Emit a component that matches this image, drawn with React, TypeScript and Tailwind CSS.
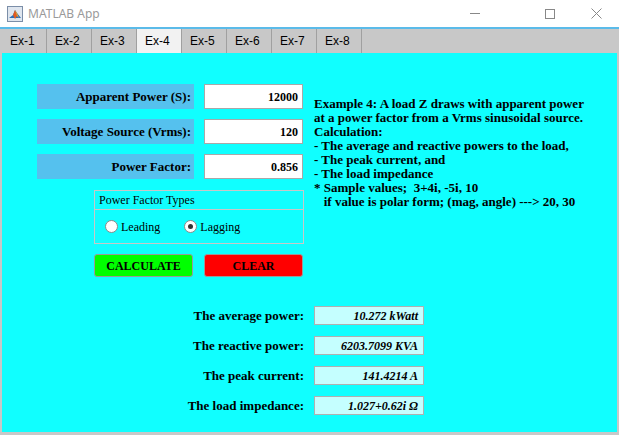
import React from "react";

const serif = { fontFamily: '"Liberation Serif", "DejaVu Serif", serif' };

function TitleBar() {
  return (
    <div className="h-[29px] bg-white flex items-center border-b-2 border-[#5bbbe9]">
      <svg width="16" height="16" viewBox="0 0 16 16" className="ml-[7px]">
        <rect x="0.5" y="0.5" width="15" height="15" fill="#dfe6ef" stroke="#7b8ea8" />
        <path d="M2 12 L6 9 L8 4 L10 7 L14 12 Z" fill="#2b6fb7" />
        <path d="M6 9 L8 4 L10 10 L8 13 Z" fill="#e55b1f" />
        <path d="M8 4 L10 7 L12 12 L10 10 Z" fill="#f5a623" />
      </svg>
      <span className="ml-[5px] text-[12px] text-[#9a9a9a]" style={{ fontFamily: '"Noto Sans", sans-serif' }}>
        MATLAB App
      </span>
      <div className="ml-auto flex items-center h-full">
        <div className="w-[46px] flex justify-center">
          <div className="w-[10px] h-px bg-[#888]" />
        </div>
        <div className="w-[46px] ml-[29px] flex justify-center">
          <div className="w-[10px] h-[10px] border border-[#888]" />
        </div>
        <div className="w-[46px] flex justify-center">
          <svg width="11" height="11" viewBox="0 0 11 11">
            <path d="M0.5 0.5 L10.5 10.5 M10.5 0.5 L0.5 10.5" stroke="#888" strokeWidth="1" />
          </svg>
        </div>
      </div>
    </div>
  );
}

function Tabs() {
  const tabs = ["Ex-1", "Ex-2", "Ex-3", "Ex-4", "Ex-5", "Ex-6", "Ex-7", "Ex-8"];
  return (
    <div className="h-[24px] bg-[#c8c8c8] flex pl-[2px]" style={{ fontFamily: '"Liberation Sans", sans-serif' }}>
      {tabs.map((t) => (
        <div
          key={t}
          className={`w-[45px] h-full border-r border-[#a0a0a0] flex items-center pl-[8px] text-[12px] text-black ${
            t === "Ex-4" ? "bg-[#f2f2f2]" : ""
          }`}
        >
          {t}
        </div>
      ))}
    </div>
  );
}

function InputRow({ label, value }: { label: string; value: string }) {
  return (
    <div className="flex items-center gap-[10px]">
      <div className="w-[157px] h-[25px] bg-[#55c1ee] flex items-center justify-end pr-[3px] text-[13px] font-bold text-black">
        {label}
      </div>
      <div className="w-[99px] h-[25px] bg-white border border-[#a8a8a8] flex items-center justify-end pr-[4px] text-[12px] font-bold text-black">
        {value}
      </div>
    </div>
  );
}

function Radio({ label, checked }: { label: string; checked?: boolean }) {
  return (
    <div className="flex items-center gap-[3px]">
      <div className="w-[13px] h-[13px] rounded-full bg-white border border-[#8a8a8a] flex items-center justify-center">
        {checked && <div className="w-[5px] h-[5px] rounded-full bg-[#333]" />}
      </div>
      <span className="text-[12px] text-black">{label}</span>
    </div>
  );
}

function OutputRow({ label, value }: { label: string; value: string }) {
  return (
    <div className="flex items-center h-[19px]">
      <div className="w-[124px] text-right text-[13px] leading-[19px] font-bold text-black">{label}</div>
      <div className="ml-[10px] w-[110px] h-[19px] bg-[#c5ffff] border border-[#b0b0b0] flex items-center justify-end pr-[5px] text-[12px] font-bold italic text-black">
        {value}
      </div>
    </div>
  );
}

export default function App() {
  const lines = [
    "Example 4: A load Z draws with apparent power",
    "at a power factor from a Vrms sinusoidal source.",
    "Calculation:",
    "- The average and reactive powers to the load,",
    "- The peak current, and",
    "- The load impedance",
    "* Sample values;  3+4i, -5i, 10",
    "   if value is polar form; (mag, angle) ---> 20, 30",
  ];
  return (
    <div className="w-[619px] h-[435px] bg-white overflow-hidden flex flex-col">
      <TitleBar />
      <Tabs />
      <div
        className="flex-1 bg-[#10ffff] border-l-2 border-r-2 border-b-[3px] border-[#c8c8c8] flex flex-col"
        style={serif}
      >
        <div className="flex pt-[31px]">
          <div className="ml-[35px] flex flex-col gap-[10px]">
            <InputRow label="Apparent Power (S):" value="12000" />
            <InputRow label="Voltage Source (Vrms):" value="120" />
            <InputRow label="Power Factor:" value="0.856" />
            <div className="ml-[57px] mt-px w-[210px] h-[54px] border border-[#c8c8c8] flex flex-col">
              <div className="h-[19px] border-b border-[#c8c8c8] pl-[4px] text-[12px] text-black flex items-center">
                Power Factor Types
              </div>
              <div className="flex-1 flex items-center pl-[10px] gap-[24px]">
                <Radio label="Leading" />
                <Radio label="Lagging" checked />
              </div>
            </div>
            <div className="ml-[57px] flex gap-[11px]">
              <div className="w-[99px] h-[23px] rounded-[3px] bg-[#00ff00] border border-[#9a9a9a] flex items-center justify-center text-[12px] font-bold text-black">
                CALCULATE
              </div>
              <div className="w-[99px] h-[23px] rounded-[3px] bg-[#ff0000] border border-[#9a9a9a] flex items-center justify-center text-[12px] font-bold text-black">
                CLEAR
              </div>
            </div>
          </div>
          <div className="ml-[10px] mt-[13px] text-[13px] font-bold leading-[14px] text-black whitespace-pre">
            {lines.map((l) => (
              <div key={l}>{l}</div>
            ))}
          </div>
        </div>
        <div className="mt-[29px] ml-[178px] flex flex-col gap-[11px]">
          <OutputRow label="The average power:" value="10.272 kWatt" />
          <OutputRow label="The reactive power:" value="6203.7099 KVA" />
          <OutputRow label="The peak current:" value="141.4214 A" />
          <OutputRow label="The load impedance:" value="1.027+0.62i Ω" />
        </div>
      </div>
    </div>
  );
}
